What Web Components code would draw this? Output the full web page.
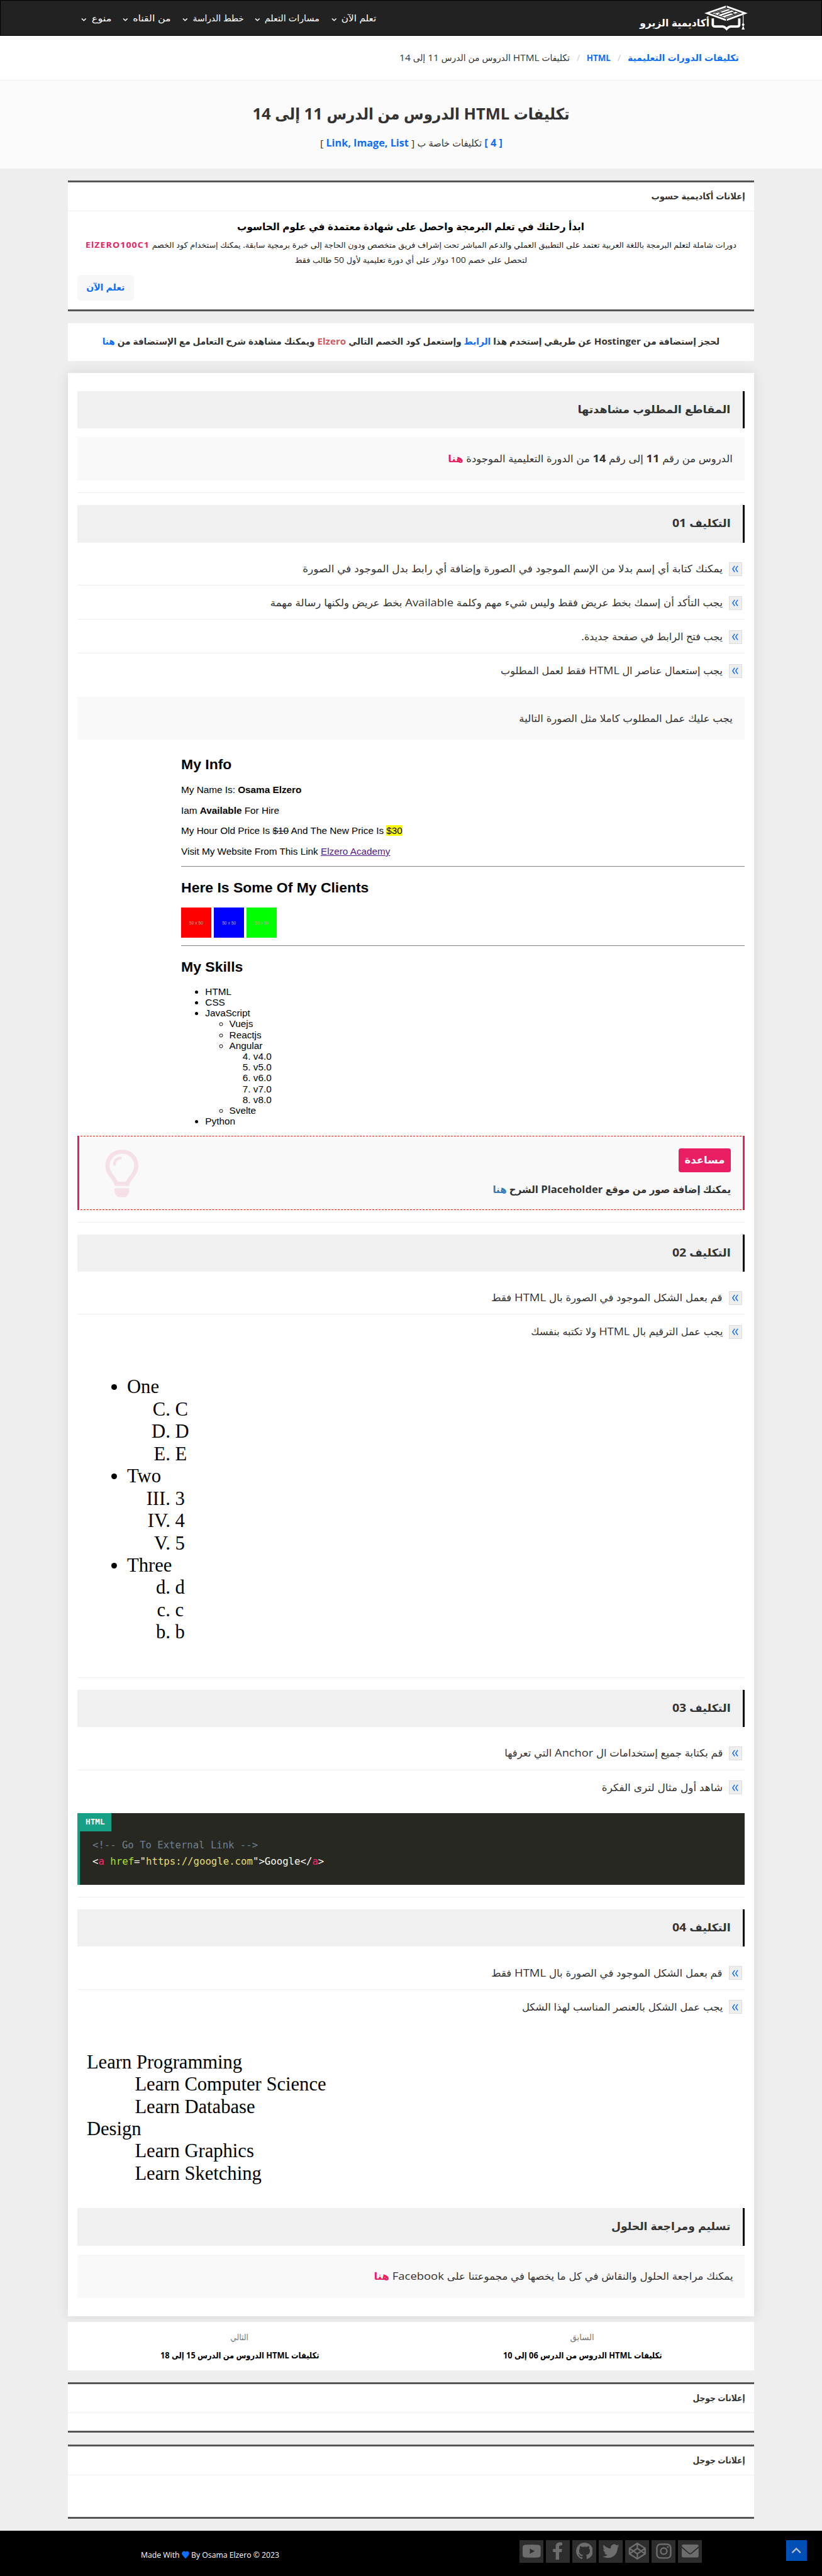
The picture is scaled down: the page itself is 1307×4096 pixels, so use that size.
<!DOCTYPE html>
<html lang="ar" dir="rtl">
<head>
<meta charset="utf-8">
<title>تكليفات HTML الدروس من الدرس 11 إلى 14</title>
<style>
html{background:#eee}
body{margin:0;zoom:.95656;font-family:"Open Sans","DejaVu Sans Condensed","DejaVu Sans",sans-serif;font-size:16px;color:#333;background:#eee;height:4282px;overflow:hidden}
main{display:block;width:1140px;margin:20px auto 0}
.blue{color:#0d6efd}.pink{color:#e91e63}.red{color:#cd5c5c}.steel{color:#337ab7}
.shot{direction:ltr;text-align:left;color:#000}
.arial{font:16px/18px "Liberation Sans",sans-serif;padding-left:173px;height:658px}
.arial h2{font-size:24px;line-height:28px;margin:0 0 19px}
.arial p{margin:0 0 16px}
.arial hr{margin:0;border:0;border-top:1px solid #8c8c8c;border-bottom:1px solid #eee;height:0}
.arial mark{background:#ff0;color:#000}
.arial a{color:#551a8b;text-decoration:underline}
.arial ul,.arial ol{margin:0;padding-left:40px}
.sq{display:flex;gap:4.5px;height:50px;margin-bottom:12px}
.sq span{width:50px;text-align:center;font-size:7px;line-height:52px;color:#a9a9a9}
.times{font:32px/37.05px "Liberation Serif",serif}
.times ul,.times ol{margin:0;padding-left:80px}
.times dl{margin:0}.times dd{margin:0 0 0 80px}
</style>
</head>
<body>
<elz-header></elz-header>
<elz-crumbs></elz-crumbs>
<elz-hero></elz-hero>
<main>
<elz-panel style="height:217px">
 <fit-text slot="title" w="156">إعلانات أكاديمية حسوب</fit-text>
 <elz-promo></elz-promo>
</elz-panel>
<elz-strip><fit-text w="1026"><b>لحجز إستضافة من Hostinger عن طريقي إستخدم هذا <span class="blue">الرابط</span> وإستعمل كود الخصم التالي <span class="red">Elzero</span> ويمكنك مشاهدة شرح التعامل مع الإستضافة من <span class="blue">هنا</span></b></fit-text></elz-strip>
<elz-card>
 <elz-heading><fit-text w="254">المقاطع المطلوب مشاهدتها</fit-text></elz-heading>
 <elz-note style="margin-top:15px"><fit-text w="473">الدروس من رقم <b>11</b> إلى رقم <b>14</b> من الدورة التعليمية الموجودة <b class="pink">هنا</b></fit-text></elz-note>
 <elz-rule style="margin:20px 0"></elz-rule>
 <elz-heading><fit-text w="97">التكليف 01</fit-text></elz-heading>
 <elz-tasks style="height:256px">
  <elz-task><fit-text w="698">يمكنك كتابة أي إسم بدلا من الإسم الموجود في الصورة وإضافة أي رابط بدل الموجود في الصورة</fit-text></elz-task>
  <elz-task><fit-text w="752">يجب التأكد أن إسمك بخط عريض فقط وليس شيء مهم وكلمة Available بخط عريض ولكنها رسالة مهمة</fit-text></elz-task>
  <elz-task><fit-text w="235">يجب فتح الرابط في صفحة جديدة.</fit-text></elz-task>
  <elz-task last><fit-text w="369">يجب إستعمال عناصر ال HTML فقط لعمل المطلوب</fit-text></elz-task>
 </elz-tasks>
 <elz-note><fit-text w="355">يجب عليك عمل المطلوب كاملا مثل الصورة التالية</fit-text></elz-note>
 <div class="shot arial"><div style="padding-top:27px">
  <h2>My Info</h2>
  <p>My Name Is: <b>Osama Elzero</b></p>
  <p>Iam <b>Available</b> For Hire</p>
  <p>My Hour Old Price Is <del>$10</del> And The New Price Is <mark>$30</mark></p>
  <p>Visit My Website From This Link <a>Elzero Academy</a></p>
  <hr>
  <h2 style="margin-top:20px">Here Is Some Of My Clients</h2>
  <div class="sq"><span style="background:#f00">50 x 50</span><span style="background:#00f">50 x 50</span><span style="background:#0f0">50 x 50</span></div>
  <hr>
  <h2 style="margin:20px 0 18px">My Skills</h2>
  <ul><li>HTML</li><li>CSS</li><li>JavaScript<ul><li>Vuejs</li><li>Reactjs</li><li>Angular<ol start="4"><li>v4.0</li><li>v5.0</li><li>v6.0</li><li>v7.0</li><li>v8.0</li></ol></li><li>Svelte</li></ul></li><li>Python</li></ul>
 </div></div>
 <elz-help><fit-text slot="tag" w="67">مساعدة</fit-text><fit-text w="396">يمكنك إضافة صور من موقع Placeholder الشرح <span class="steel">هنا</span></fit-text></elz-help>
 <elz-rule style="margin:20px 0"></elz-rule>
 <elz-heading><fit-text w="97">التكليف 02</fit-text></elz-heading>
 <elz-tasks style="height:173px">
  <elz-task><fit-text w="384">قم بعمل الشكل الموجود في الصورة بال HTML فقط</fit-text></elz-task>
  <elz-task last><fit-text w="319">يجب عمل الترقيم بال HTML ولا تكتبه بنفسك</fit-text></elz-task>
 </elz-tasks>
 <div class="shot times" style="height:501px;padding:1px 0 0 3px;box-sizing:border-box">
  <ul><li>One<ol type="A" start="3"><li>C</li><li>D</li><li>E</li></ol></li><li>Two<ol type="I" start="3"><li>3</li><li>4</li><li>5</li></ol></li><li>Three<ol type="a" start="4" reversed><li>d</li><li>c</li><li>b</li></ol></li></ul>
 </div>
 <elz-rule style="margin:0 0 20px"></elz-rule>
 <elz-heading><fit-text w="97">التكليف 03</fit-text></elz-heading>
 <elz-tasks style="height:143px">
  <elz-task><fit-text w="363">قم بكتابة جميع إستخدامات ال Anchor التي تعرفها</fit-text></elz-task>
  <elz-task last><fit-text w="201">شاهد أول مثال لترى الفكرة</fit-text></elz-task>
 </elz-tasks>
 <elz-code></elz-code>
 <elz-rule style="margin:20px 0"></elz-rule>
 <elz-heading><fit-text w="97">التكليف 04</fit-text></elz-heading>
 <elz-tasks style="height:173px">
  <elz-task><fit-text w="384">قم بعمل الشكل الموجود في الصورة بال HTML فقط</fit-text></elz-task>
  <elz-task last><fit-text w="334">يجب عمل الشكل بالعنصر المناسب لهذا الشكل</fit-text></elz-task>
 </elz-tasks>
 <div class="shot times" style="height:262px;padding:1px 0 0 16px;box-sizing:border-box">
  <dl><dt>Learn Programming</dt><dd>Learn Computer Science</dd><dd>Learn Database</dd><dt>Design</dt><dd>Learn Graphics</dd><dd>Learn Sketching</dd></dl>
 </div>
 <elz-heading><fit-text w="198">تسليم ومراجعة الحلول</fit-text></elz-heading>
 <elz-note style="margin-top:15px"><fit-text w="597">يمكنك مراجعة الحلول والنقاش في كل ما يخصها في مجموعتنا على Facebook <b class="pink">هنا</b></fit-text></elz-note>
</elz-card>
<elz-pager></elz-pager>
<elz-panel style="height:84px"><fit-text slot="title" w="87">إعلانات جوجل</fit-text></elz-panel>
<elz-panel style="height:123px"><fit-text slot="title" w="87">إعلانات جوجل</fit-text></elz-panel>
</main>
<elz-footer></elz-footer>
<script>
const define=(name,html,extra)=>{
  const t=document.createElement('template');
  t.innerHTML='<style>:host{display:block;box-sizing:border-box}*{box-sizing:border-box}.blue{color:#0d6efd}.pink{color:#e91e63}</style>'+html;
  customElements.define(name,class extends HTMLElement{
    constructor(){super();this.attachShadow({mode:'open'}).append(t.content.cloneNode(true));}
    connectedCallback(){if(extra)extra(this);}
  });
};

define('elz-header',`<style>
:host{height:60px;background:#222;border:1px solid #000;color:#fff;display:flex;justify-content:space-between;padding:0 121px 0 134px;font-size:14.5px;line-height:58px}
.logo{display:flex;height:58px;direction:ltr}.logo svg{display:block;margin-left:-9px}
.name{font-weight:bold;font-size:17px;line-height:75px}
nav{display:flex}.i{display:flex;align-items:center;gap:8px}.i svg{margin-top:5px}
</style>
<div class="logo"><fit-text class="name" w="116" dir="rtl">أكاديمية الزيرو</fit-text>
<svg width="74" height="58" viewBox="0 0 74 58" fill="none"><path d="M15 29.500V40Q15 43 19 43H31Q34 43 38 47Q42 43 45 43H56Q59 43 59 40V29.500" stroke="#fff" stroke-width="4"/><path d="M1 21 37.500 8 73 21 37.500 34Z" fill="#fff"/><path d="M12 21 37.500 12 62 21 37.500 30Z" stroke="#222" stroke-width="1.600"/><path d="M18 21 40 13.500M24 23 46 15.500M30 25.500 52 18M36 28 58 20.500M24 18.500 31 21M45 20 51 22.500" stroke="#222" stroke-width="1.500"/><path d="M37.500 7V12M37.500 30V35" stroke="#222" stroke-width="1.500"/><path d="M65.500 24V40" stroke="#fff" stroke-width="1.200"/><circle cx="65.500" cy="40" r="2" fill="#fff"/><path d="M65.500 41 68 48H63Z" fill="#fff"/></svg></div>
<nav></nav>`,el=>{
  const nav=el.shadowRoot.querySelector('nav');
  nav.innerHTML=[['تعلم الآن',58,20],['مسارات التعلم',91,18],['خطط الدراسة',85,19],['من القناه',63,19],['منوع',33,0]].map(([t,w,m])=>
  `<div class="i" style="margin-left:${m}px"><fit-text w="${w}">${t}</fit-text><svg width="9" height="7" viewBox="0 0 9 7" fill="none" stroke="#fff" stroke-width="1.600"><path d="M1 1.500 4.500 5 8 1.500"/></svg></div>`).join('');
});

define('elz-crumbs',`<style>
:host{height:74px;background:#fff;border-bottom:1px solid #eee;padding:0 138px;display:flex;line-height:73px;font-size:15px}
i{font-style:normal;color:#ccc;width:28px;text-align:center}
</style><fit-text w="185"><b class="blue">تكليفات الدورات التعليمية</b></fit-text><i>/</i><fit-text w="40"><b class="blue">HTML</b></fit-text><i>/</i><fit-text w="283">تكليفات HTML الدروس من الدرس 11 إلى 14</fit-text>`);

define('elz-hero',`<style>
:host{height:146px;background:#fbfbfb;text-align:center;padding-top:30px}
h1{font-size:26px;line-height:50px;height:50px;margin:0}p{margin:0;line-height:48px;font-size:16px}
</style><h1><fit-text w="527">تكليفات HTML الدروس من الدرس 11 إلى 14</fit-text></h1><p><fit-text w="303"><b class="blue">[ 4 ]</b> تكليفات خاصة ب [ <b class="blue">Link, Image, List</b> ]</fit-text></p>`);

define('elz-panel',`<style>
:host{background:#fff;border-top:3.200px solid #555;border-bottom:3.200px solid #555;margin-bottom:20px}
.h{height:48px;border-bottom:1px solid #eee;padding:0 15px;line-height:45px;font-size:14.5px;font-weight:bold}
</style><div class="h"><slot name="title"></slot></div><slot></slot>`);

define('elz-promo',`<style>
:host{text-align:center;height:163px;padding-top:8px;color:#000}
h3{margin:0;font-size:17px;line-height:34px}.l{line-height:25px;font-size:13px;height:25px;color:#222}
.b{display:flex;justify-content:flex-end;padding:0 15px;margin-top:12px}
a{width:94px;height:43px;background:#f7f7f7;border-radius:6px;font-weight:bold;font-size:14.500px;line-height:42px;color:#0d6efd}
.c{letter-spacing:1px}
</style><h3><fit-text w="577">ابدأ رحلتك في تعلم البرمجة واحصل على شهادة معتمدة في علوم الحاسوب</fit-text></h3>
<div class="l" style="margin-top:2px"><fit-text w="1082">دورات شاملة لتعلم البرمجة باللغة العربية تعتمد على التطبيق العملي والدعم المباشر تحت إشراف فريق متخصص ودون الحاجة إلى خبرة برمجية سابقة. يمكنك إستخدام كود الخصم <b class="pink c">ElZERO100C1</b></fit-text></div>
<div class="l"><fit-text w="386">لتحصل على خصم 100 دولار على أي دورة تعليمية لأول 50 طالب فقط</fit-text></div>
<div class="b"><a><fit-text w="64">تعلم الآن</fit-text></a></div>`);

define('elz-strip',`<style>:host{background:#fff;height:63px;margin-bottom:20px;text-align:center;line-height:61px;font-size:15px}</style><slot></slot>`);
define('elz-card',`<style>:host{background:#fff;height:3230px;padding:30px 15px;box-shadow:0 0 20px rgba(0,0,0,.1);margin-bottom:10px}</style><slot></slot>`);
define('elz-heading',`<style>:host{height:62px;background:#f0f0f0;border-right:3.200px solid #000;padding-right:21px;line-height:60px;font-size:18px;font-weight:bold}</style><slot></slot>`);
define('elz-note',`<style>:host{height:72px;background:#f9f9f9;padding-right:20px;line-height:72px;font-size:17px}</style><slot></slot>`);
define('elz-rule',`<style>:host{height:1px;background:#eee}</style>`);
define('elz-tasks',`<style>:host{padding-top:15px}</style><slot></slot>`);
define('elz-task',`<style>
:host{height:56.600px;border-bottom:1px solid #eee;display:flex;padding:0 5px;line-height:57px;font-size:17px}
:host([last]){border-color:transparent}
i{width:22px;height:23px;background:#eee;border:1px solid #ddd;margin:17.500px 0 0 10px;display:flex;align-items:center;justify-content:center}
</style><i><svg width="12" height="12" viewBox="0 0 12 12" fill="none" stroke="#0d6efd" stroke-width="1.500"><path d="M5.500 1 2 6 5.500 11M10.500 1 7 6 10.500 11"/></svg></i><slot></slot>`);

define('elz-help',`<style>
:host{height:123px;background:#f9f9f9;border:1px dashed red;border-left:3.200px solid #e91e63;border-right:3.200px solid #e91e63;display:flex;justify-content:space-between;padding:20px 20px 0 43px;font-weight:bold;font-size:17px}
.t{width:87px;height:40px;background:#e91e63;border-radius:4px;color:#fff;text-align:center;line-height:38px}
p{margin:10px 0 0;line-height:36px}
</style><div><div class="t"><slot name="tag"></slot></div><p><slot></slot></p></div>
<svg width="56" height="82" viewBox="0 0 56 82" fill="none"><path d="M28 5.500C13 5.500 4 17 4 29.500 4 42 15 48 19 59H37C41 48 52 42 52 29.500 52 17 43 5.500 28 5.500Z" stroke="#f6e0e7" stroke-width="7"/><path d="M15.500 26.500Q16 17 25.500 16" stroke="#f6e0e7" stroke-width="4.500" stroke-linecap="round"/><path d="M16 66H40V73Q37 81 33 81H23Q19 81 16 73Z" fill="#f6e0e7"/></svg>`);

define('elz-code',`<style>
:host{height:119px;background:#272822;direction:ltr;text-align:left;border-left:5px solid #16a085;font:16.400px/27px "DejaVu Sans Mono",monospace;color:#f8f8f2}
.tag{width:53px;height:30px;background:#16a085;color:#fff;font-weight:bold;font-size:13px;line-height:30px;padding-left:10px;margin-bottom:10px}
.l{padding-left:21px;height:27px;white-space:pre}
</style><div class="tag"><fit-text ltr w="32">HTML</fit-text></div>
<div class="l"><fit-text ltr w="275"><span style="color:#708090">&lt;!-- Go To External Link --&gt;</span></fit-text></div>
<div class="l"><fit-text ltr w="385">&lt;<span style="color:#f92672">a</span> <span style="color:#a6e22e">href</span>="<span style="color:#e6db74">https://google.com</span>"&gt;Google&lt;/<span style="color:#f92672">a</span>&gt;</fit-text></div>`);

define('elz-pager',`<style>
:host{height:80px;background:#fff;display:flex;margin-bottom:20px;text-align:center;padding-top:10px}
div{flex:1;color:#000}p{margin:0;font-size:14px;line-height:30px;height:30px;color:#777}b{display:block;font-size:14px;line-height:30px}
</style><div><p><fit-text w="40">السابق</fit-text></p><b><fit-text w="264">تكليفات HTML الدروس من الدرس 06 إلى 10</fit-text></b></div>
<div><p><fit-text w="30">التالي</fit-text></p><b><fit-text w="264">تكليفات HTML الدروس من الدرس 15 إلى 18</fit-text></b></div>`);

define('elz-footer',`<style>
:host{height:75px;background:#000;color:#fff;direction:ltr;display:flex;padding:15px 25px 0 234px;justify-content:space-between;font-size:14px}
.m{line-height:49px;width:600px}.m svg{vertical-align:-2px}
.s{display:flex;gap:4px;width:304px;margin-left:29px}
.s div{width:40px;height:38px;background:#2d2d2d;display:flex;align-items:center;justify-content:center}
.u{width:35px;height:35px;background:#004fb5;margin-left:139px;display:flex;align-items:center;justify-content:center}
</style><div class="m"><fit-text ltr w="230">Made With <svg width="14" height="13" viewBox="0 0 16 15"><path fill="#0d6efd" d="M8 15 1.500 8.300A4.300 4.300 0 0 1 8 2.200 4.300 4.300 0 0 1 14.500 8.300Z"/></svg> By Osama Elzero © 2023</fit-text></div>
<div class="s">
<div><svg width="32" height="24" viewBox="0 0 32 24"><path fill="#6d6d6d" fill-rule="evenodd" d="M5 1.500Q16 .5 27 1.500 31 2 31 6V18Q31 22 27 22.500 16 23 5 22.500 1 22 1 18V6Q1 2 5 1.500ZM13 7.500V16.500L21 12Z"/></svg></div>
<div><svg width="18" height="30" viewBox="0 0 320 512"><path fill="#6d6d6d" d="M279.140 288l14.220-92.660h-88.910v-60.130c0-25.350 12.420-50.060 52.240-50.060h40.420V6.260S260.430 0 225.360 0c-73.220 0-121.080 44.380-121.080 124.720v70.620H22.890V288h81.390v224h100.170V288z"/></svg></div>
<div><svg width="28" height="28" viewBox="0 0 16 16"><path fill="#6d6d6d" d="M8 0C3.580 0 0 3.580 0 8c0 3.540 2.290 6.530 5.470 7.590.4.070.55-.17.55-.38 0-.19-.01-.82-.01-1.490-2.010.37-2.530-.49-2.690-.94-.09-.23-.48-.94-.82-1.130-.28-.15-.68-.52-.01-.53.63-.01 1.080.58 1.230.82.72 1.210 1.870.87 2.330.66.070-.52.28-.87.51-1.070-1.780-.2-3.640-.89-3.640-3.950 0-.87.31-1.590.82-2.150-.08-.2-.36-1.020.08-2.120 0 0 .67-.21 2.200.82.64-.18 1.320-.27 2-.27s1.360.09 2 .27c1.530-1.040 2.200-.82 2.200-.82.44 1.100.16 1.920.08 2.120.51.56.82 1.270.82 2.150 0 3.070-1.870 3.750-3.650 3.950.29.25.54.73.54 1.480 0 1.070-.01 1.930-.01 2.200 0 .21.15.46.55.38A8.010 8.010 0 0 0 16 8c0-4.420-3.580-8-8-8z"/></svg></div>
<div><svg width="28" height="28" viewBox="0 0 512 512"><path fill="#6d6d6d" d="M459.370 151.716c.325 4.548.325 9.097.325 13.645 0 138.720-105.583 298.558-298.558 298.558-59.452 0-114.680-17.219-161.137-47.106 8.447.974 16.568 1.299 25.340 1.299 49.055 0 94.213-16.568 130.274-44.832-46.132-.975-84.792-31.188-98.112-72.772 6.498.974 12.995 1.624 19.818 1.624 9.421 0 18.843-1.300 27.614-3.573-48.081-9.747-84.143-51.980-84.143-102.985v-1.299c13.969 7.797 30.214 12.670 47.431 13.319-28.264-18.843-46.781-51.005-46.781-87.391 0-19.492 5.197-37.360 14.294-52.954 51.655 63.675 129.300 105.258 216.365 109.807-1.624-7.797-2.599-15.918-2.599-24.040 0-57.828 46.782-104.934 104.934-104.934 30.213 0 57.502 12.670 76.670 33.137 23.715-4.548 46.456-13.320 66.599-25.340-7.798 24.366-24.366 44.833-46.132 57.827 21.117-2.273 41.584-8.122 60.426-16.243-14.292 20.791-32.161 39.308-52.628 54.253z"/></svg></div>
<div><svg width="30" height="30" viewBox="0 0 30 30" fill="none" stroke="#6d6d6d" stroke-width="2.500" stroke-linejoin="round"><path d="M15 2 28 10.500V19.500L15 28 2 19.500V10.500ZM15 2V10.500M15 19.500V28M2 10.500 15 19.500 28 10.500M2 19.500 15 10.500 28 19.500"/></svg></div>
<div><svg width="26" height="26" viewBox="0 0 26 26" fill="none" stroke="#6d6d6d" stroke-width="2.500"><rect x="1.500" y="1.500" width="23" height="23" rx="6"/><circle cx="13" cy="13" r="5.200"/><circle cx="19.700" cy="6.300" r="1.500" fill="#6d6d6d" stroke="none"/></svg></div>
<div><svg width="28" height="22" viewBox="0 0 28 22"><path fill="#6d6d6d" d="M2.500 0H25.500Q28 0 28 3L16 13.500Q14 15 12 13.500L0 3Q0 0 2.500 0ZM0 5.500 11 15Q14 17.500 17 15L28 5.500V18.500Q28 21.500 25.500 21.500H2.500Q0 21.500 0 18.500Z"/></svg></div>
</div>
<div class="u"><svg width="17" height="11" viewBox="0 0 17 11" fill="none" stroke="#b9bcc2" stroke-width="2.500"><path d="M1.500 9.500 8.500 2.500 15.500 9.500"/></svg></div>`);

/* One line of text stretched or squeezed to the width given in "w".
   Defined last, so that the fonts its parents pass down are already in place. */
define('fit-text',`<style>:host{display:inline-block;white-space:nowrap;vertical-align:top;direction:rtl;text-align:right}
:host([ltr]){direction:ltr;text-align:left}
span{display:inline-block;transform-origin:100% 50%}:host([ltr]) span{transform-origin:0 50%}</style><span><slot></slot></span>`,el=>{
  el.style.width=el.getAttribute('w')+'px';
  const s=el.shadowRoot.querySelector('span');
  const natural=s.getBoundingClientRect().width, box=el.getBoundingClientRect().width;
  if(natural)s.style.transform='scaleX('+box/natural+')';
});
</script>
</body>
</html>
